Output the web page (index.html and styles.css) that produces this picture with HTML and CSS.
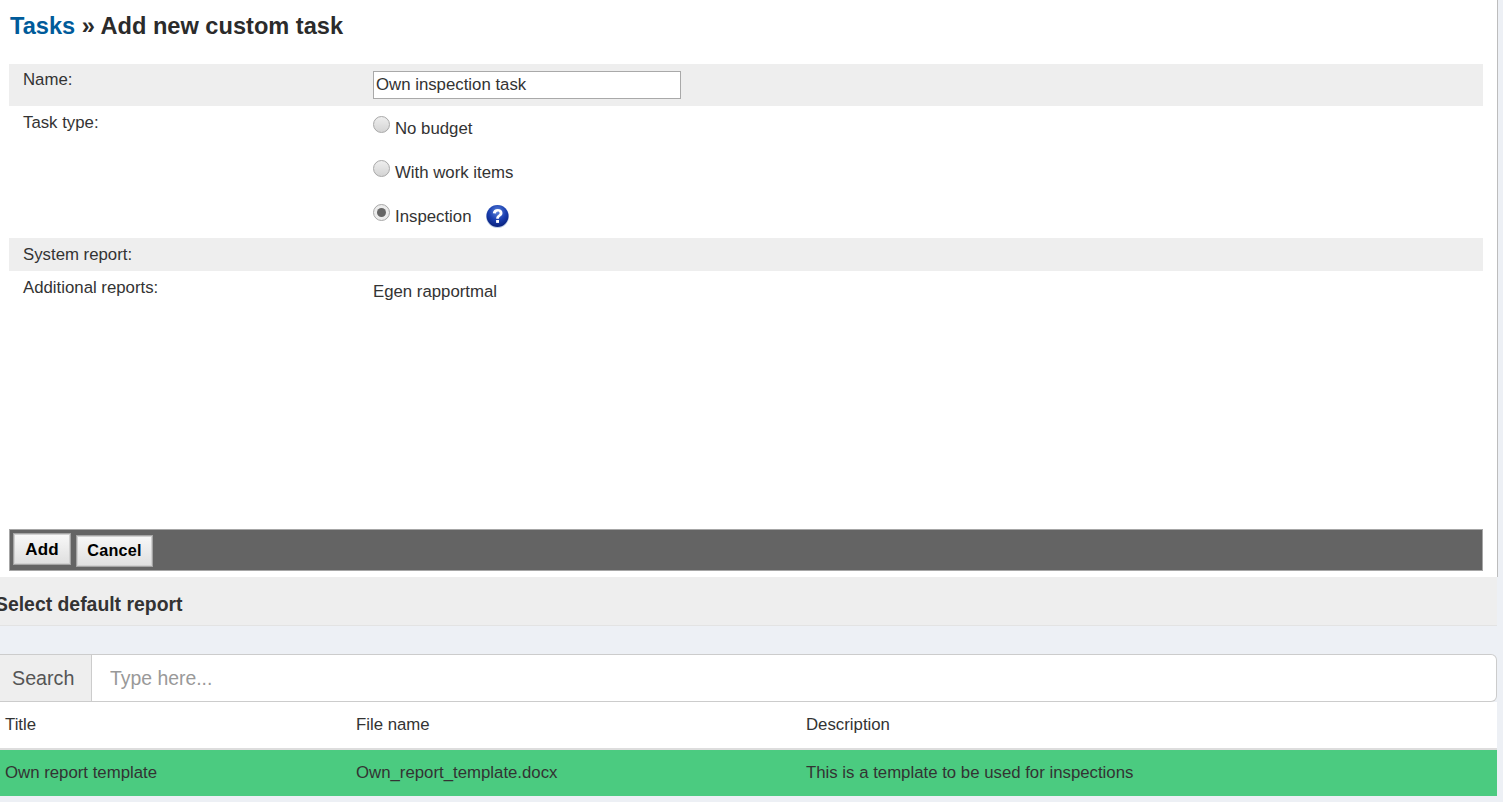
FILE: index.html
```html
<!DOCTYPE html>
<html lang="en">
<head>
<meta charset="utf-8">
<title>Add new custom task</title>
<link rel="stylesheet" href="styles.css">
</head>
<body>
<main class="main-panel">
  <h1 class="page-title"><a class="crumb" href="#">Tasks</a> » Add new custom task</h1>
  <form class="task-form">
    <div class="form-row shaded row-name">
      <div class="form-label">Name:</div>
      <div class="form-field"><input class="text-input" type="text" value="Own inspection task"></div>
    </div>
    <div class="form-row row-type">
      <div class="form-label">Task type:</div>
      <div class="form-field radio-list">
        <label class="radio-line"><span class="radio"></span><span class="radio-text">No budget</span></label>
        <label class="radio-line"><span class="radio"></span><span class="radio-text">With work items</span></label>
        <label class="radio-line"><span class="radio checked"></span><span class="radio-text">Inspection</span>
          <svg class="help-icon" viewBox="0 0 23 23" width="23" height="23" aria-hidden="true">
            <defs>
              <radialGradient id="helpfill" cx="50%" cy="30%" r="70%">
                <stop offset="0" stop-color="#5f86dc"/>
                <stop offset="0.55" stop-color="#1a3fb0"/>
                <stop offset="1" stop-color="#08207c"/>
              </radialGradient>
            </defs>
            <circle cx="11.5" cy="11.5" r="11.5" fill="#c3d3ea"/>
            <circle cx="11.5" cy="11" r="11" fill="url(#helpfill)"/>
            <path d="M6.800 8.300c.2-2.800 2.200-4.300 4.900-4.300 2.800 0 4.800 1.500 4.800 3.900 0 1.800-1 2.700-2.200 3.500-1 .7-1.400 1.200-1.400 2.400h-2.700c0-2 .7-2.900 1.900-3.800 1-.7 1.500-1.100 1.500-1.900 0-.9-.7-1.500-1.700-1.500-1.100 0-1.800.7-1.900 1.900z" fill="#fff"/>
            <rect x="10.100" y="15" width="2.900" height="2.900" fill="#fff"/>
          </svg>
        </label>
      </div>
    </div>
    <div class="form-row shaded row-system">
      <div class="form-label">System report:</div>
    </div>
    <div class="form-row row-additional">
      <div class="form-label">Additional reports:</div>
      <div class="form-field report-name">Egen rapportmal</div>
    </div>
    <div class="action-bar">
      <button class="btn btn-primary" type="button">Add</button>
      <button class="btn btn-secondary" type="button">Cancel</button>
    </div>
  </form>
</main>
<section class="report-panel">
  <header class="report-header"><h2 class="report-title">Select default report</h2></header>
  <div class="search-group">
    <span class="search-addon">Search</span>
    <input class="search-input" type="text" placeholder="Type here...">
  </div>
  <table class="report-table">
    <thead>
      <tr><th class="col-title">Title</th><th class="col-file">File name</th><th>Description</th></tr>
    </thead>
    <tbody>
      <tr class="selected"><td>Own report template</td><td>Own_report_template.docx</td><td>This is a template to be used for inspections</td></tr>
    </tbody>
  </table>
</section>
</body>
</html>
```
FILE: styles.css
```css
* { box-sizing: border-box; }
html, body { margin: 0; padding: 0; }
body {
  height: 802px;
  overflow: hidden;
  background: #edf0f5;
  color: #333;
  font-family: "Liberation Sans", Arial, sans-serif;
  font-size: 16.8px;
}
.main-panel {
  width: 1498px;
  height: 577px;
  padding: 0 14px 0 9px;
  background: #fff;
  border-right: 1px solid #bdbdbd;
  display: flex;
  flex-direction: column;
}
.page-title {
  margin: 0;
  height: 64px;
  padding: 12px 0 0 1px;
  font-size: 23.6px;
  line-height: 28px;
  font-weight: 700;
  color: #2b2b2b;
}
.crumb { color: #005b9a; text-decoration: none; }
.task-form { flex: 1; display: flex; flex-direction: column; }
.form-row { display: flex; }
.shaded { background: #eee; }
.row-name { height: 42px; }
.row-type { height: 132px; }
.row-system { height: 33px; }
.row-additional { height: 258px; }
.form-label {
  width: 364px;
  flex: none;
  padding: 8px 0 0 14px;
  line-height: 18px;
}
.row-name .form-label { padding-top: 7px; }
.form-field { flex: 1; }
.row-name .form-field { padding-top: 7px; }
.text-input {
  display: block;
  width: 308px;
  height: 28px;
  padding: 0 2px;
  border: 1px solid #a9a9a9;
  background: #fff;
  color: #333;
  font: 16.8px "Liberation Sans", Arial, sans-serif;
}
.radio-list { display: flex; flex-direction: column; }
.radio-line { display: flex; align-items: flex-start; height: 44px; padding-top: 14px; }
.radio {
  flex: none;
  width: 17px;
  height: 17px;
  margin-top: -4px;
  margin-right: 5px;
  border-radius: 50%;
  border: 1px solid #a8a8a8;
  background: linear-gradient(#eeeeee, #d4d4d4);
  position: relative;
}
.radio.checked { background: #ececec; }
.radio.checked::after {
  content: "";
  position: absolute;
  left: 3px;
  top: 3px;
  width: 9px;
  height: 9px;
  border-radius: 50%;
  background: #666;
}
.radio-text { line-height: 18px; }
.help-icon { margin: -3px 0 0 14px; flex: none; }
.report-name { padding-top: 12px; line-height: 18px; }
.action-bar {
  height: 42px;
  display: flex;
  align-items: flex-start;
  gap: 5px;
  padding: 3px 3px 0;
  background: #646464;
  border: 1px solid #a6a6a6;
}
.btn {
  height: 32px;
  padding: 0;
  border: 1px solid #a4a4a4;
  box-shadow: inset 0 0 0 1px #d0d0d0;
  background: linear-gradient(#f8f8f8, #dfdfdf);
  color: #000;
  font: 700 16.2px "Liberation Sans", Arial, sans-serif;
  letter-spacing: 0.2px;
}
.btn-primary { width: 58px; font-size: 17px; padding-top: 2px; }
.btn-secondary { width: 77px; margin-top: 2px; padding-bottom: 2px; }
.report-panel { width: 1497px; display: flex; flex-direction: column; }
.report-header {
  height: 49px;
  background: #eee;
  border-bottom: 1px solid #e3e3e3;
  margin-bottom: 28px;
}
.report-title {
  margin: 0 0 0 -5px;
  padding-top: 17px;
  font-size: 19.4px;
  line-height: 20px;
  font-weight: 700;
  color: #333;
}
.search-group {
  height: 48px;
  display: flex;
  background: #fff;
  border: 1px solid #ccc;
  border-left: 0;
  border-radius: 0 6px 6px 0;
}
.search-addon {
  width: 92px;
  flex: none;
  padding-left: 12px;
  background: #eee;
  border-right: 1px solid #ccc;
  color: #555;
  font-size: 19.7px;
  line-height: 46px;
}
.search-input {
  flex: 1;
  min-width: 0;
  padding: 0 18px;
  border: 0;
  background: transparent;
  border-radius: 0 6px 6px 0;
  font: 19.4px "Liberation Sans", Arial, sans-serif;
  color: #555;
}
.search-input::placeholder { color: #999; opacity: 1; }
.report-table {
  width: 100%;
  border-collapse: collapse;
  table-layout: fixed;
  background: #fff;
  font-size: 16.8px;
}
.report-table th, .report-table td {
  padding: 0 0 0 5px;
  text-align: left;
  font-weight: 400;
  line-height: 18px;
}
.report-table th { height: 47px; border-bottom: 2px solid #ddd; color: #333; }
.report-table td { height: 46px; padding-bottom: 1px; }
.report-table tbody tr { height: 47px; }
.col-title { width: 351px; }
.col-file { width: 450px; }
.selected { background: #4bcb80; }
```
